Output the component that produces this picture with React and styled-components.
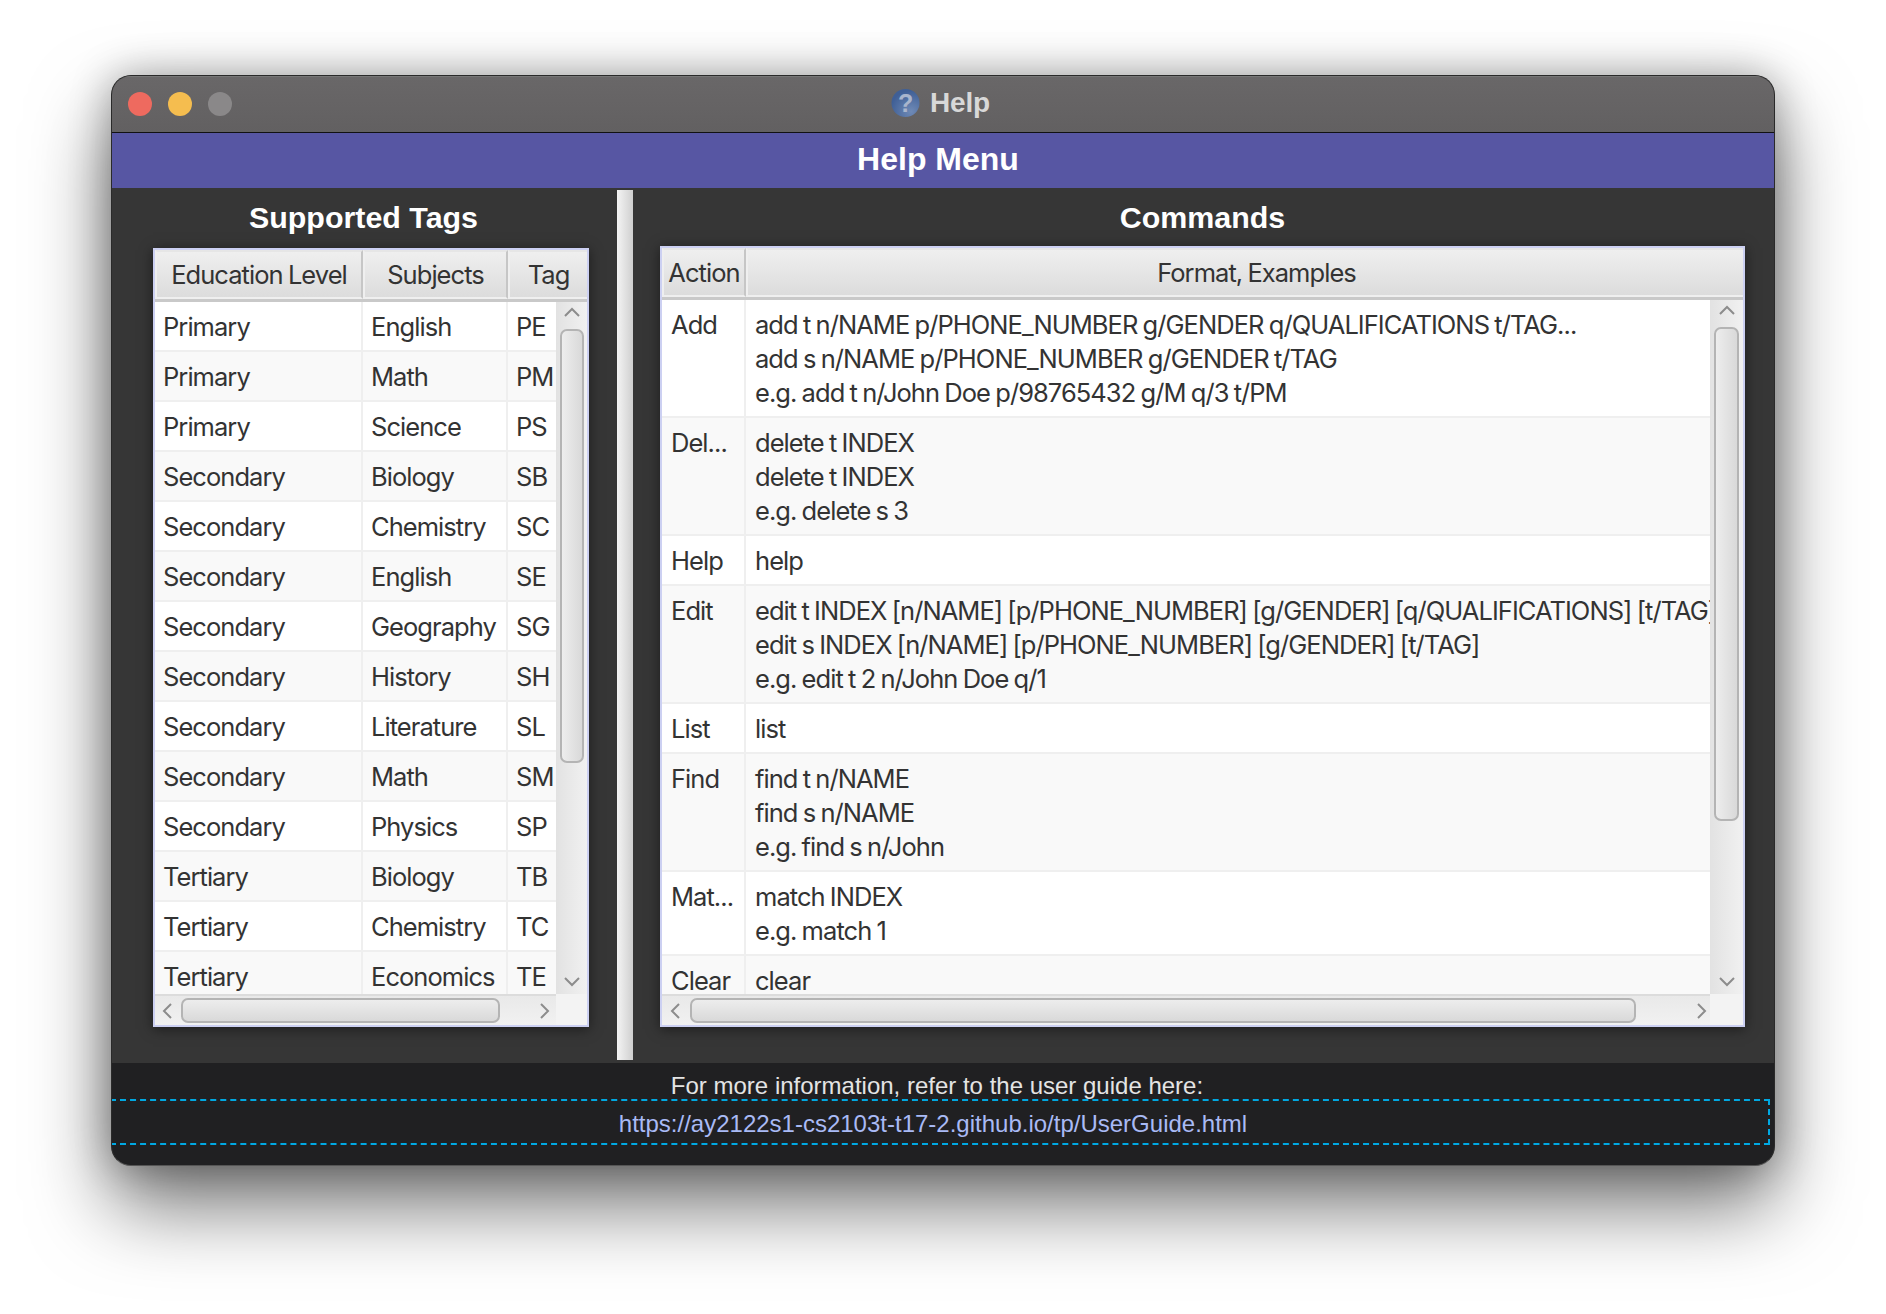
import React from 'react';
import styled, { createGlobalStyle } from 'styled-components';

const GlobalStyle = createGlobalStyle`
  html, body { margin: 0; padding: 0; background: #fff; }
  * { box-sizing: border-box; }
`;

const TABLE_FONT = `Inter, Roboto, "Liberation Sans", sans-serif`;
const LABEL_FONT = `"Liberation Sans", Arial, sans-serif`;

const Page = styled.div`
  width: 1886px;
  height: 1314px;
  padding: 75px 0 0 111px;
  overflow: hidden;
`;

const Window = styled.div`
  width: 1664px;
  height: 1091px;
  display: flex;
  flex-direction: column;
  border: 1px solid #2a2a2a;
  border-bottom-color: #555;
  border-radius: 20px;
  overflow: hidden;
  background: #363636;
  box-shadow: 0 40px 80px rgba(0, 0, 0, 0.55), 0 0 40px rgba(0, 0, 0, 0.3);
`;

const TitleBar = styled.div`
  height: 57px;
  flex: none;
  display: flex;
  align-items: center;
  padding: 0 0 2px 16px;
  gap: 16px;
  position: relative;
  background: linear-gradient(#696768, #626061);
  border-top: 1px solid #777;
  border-bottom: 1px solid #111;
`;

const Light = styled.span`
  width: 24px;
  height: 24px;
  border-radius: 50%;
  background: ${p => p.$color};
`;

const WindowTitle = styled.div`
  position: absolute;
  left: 779px;
  top: 10px;
  display: flex;
  align-items: center;
  gap: 10px;
  font: bold 28px ${LABEL_FONT};
  color: #d8d8d8;
  letter-spacing: -0.2px;
`;

const Banner = styled.div`
  height: 55px;
  flex: none;
  padding-right: 10px;
  background: #5756a3;
  color: #fff;
  font: bold 32px/53px ${LABEL_FONT};
  text-align: center;
`;

const Content = styled.div`
  height: 875px;
  flex: none;
  display: flex;
`;

const Pane = styled.section`
  width: ${p => p.$width}px;
  flex: none;
  display: flex;
  flex-direction: column;
  padding: 0 ${p => p.$right}px 36px ${p => p.$left}px;
`;

const PaneTitle = styled.h2`
  margin: 0 -${p => p.$right}px 0 -${p => p.$left}px;
  height: ${p => p.$height}px;
  flex: none;
  padding: 11px 2px 0 0;
  font: bold 30.4px/36px ${LABEL_FONT};
  color: #fff;
  text-align: center;
`;

const Divider = styled.div`
  width: 16px;
  flex: none;
  margin: 2px 0 3px;
  background: linear-gradient(to right, #f4f4f4, #cfcfcf);
`;

const Table = styled.div`
  flex: 1;
  min-height: 0;
  display: grid;
  grid-template-columns: 1fr ${p => p.$barWidth}px;
  grid-template-rows: 52px 1fr 31px;
  border: 2px solid #ccd0f2;
  background: #f2f2f2;
  box-shadow: 0 2px 12px rgba(0, 0, 0, 0.5);
  font: 25.5px ${TABLE_FONT};
  letter-spacing: -0.95px;
  word-spacing: -1px;
  color: #333;
`;

const Header = styled.div`
  grid-column: 1 / 3;
  display: grid;
  grid-template-columns: ${p => p.$columns};
  border-bottom: 3px solid #c9c9c9;
`;

const HeaderCell = styled.div`
  display: flex;
  align-items: center;
  justify-content: center;
  padding-left: ${p => p.$shift || 0}px;
  background: linear-gradient(#efefef, #dcdcdc);
  border: 2px solid #efefef;
  border-top-color: #e6e6e6;
  border-right: 2px solid #c6c6c6;
  white-space: nowrap;
  overflow: hidden;
  &:last-child { border-right: 0; }
`;

const Body = styled.div`
  overflow: hidden;
  min-width: 0;
`;

const Row = styled.div`
  display: grid;
  grid-template-columns: ${p => p.$columns};
  background: ${p => (p.$odd ? '#f9f9f9' : '#fff')};
  border-bottom: 2px solid #efefef;
`;

const Cell = styled.div`
  padding: 8px 0 6px ${p => p.$inset || 8}px;
  min-height: 48px;
  line-height: 34px;
  white-space: nowrap;
  overflow: hidden;
  border-right: 2px solid #efefef;
  &:last-child { border-right: 0; }
`;

const Line = styled.div``;

const VerticalBar = styled.div`
  display: flex;
  flex-direction: column;
  align-items: center;
  background: linear-gradient(to right, #e2e2e2, #f1f1f1);
`;

const VerticalThumb = styled.div`
  width: ${p => p.$width}px;
  height: ${p => p.$height}px;
  margin-top: ${p => p.$top}px;
  border: 2px solid #b4b4b4;
  border-radius: 7px;
  background: linear-gradient(to right, #ededed, #d9d9d9);
`;

const ArrowSlot = styled.div`
  flex: none;
  display: flex;
  align-items: flex-start;
  justify-content: center;
  margin-top: ${p => (p.$end ? 'auto' : '0')};
  height: 24px;
  padding-top: 2px;
  color: #8c8c8c;
`;

const HorizontalBar = styled.div`
  display: flex;
  align-items: center;
  border-top: 2px solid #dcdcdc;
  background: linear-gradient(#e9e9e9, #f1f1f1);
  min-width: 0;
`;

const HorizontalThumb = styled.div`
  width: ${p => p.$width}px;
  height: 25px;
  flex: none;
  border: 2px solid #b4b4b4;
  border-radius: 7px;
  background: linear-gradient(#ededed, #d9d9d9);
`;

const SideArrow = styled.div`
  flex: none;
  width: ${p => p.$width}px;
  display: flex;
  justify-content: ${p => p.$align};
  color: #8c8c8c;
`;

const Spacer = styled.div`
  flex: 1;
`;

const Corner = styled.div`
  background: #f3f3f3;
`;

const Footer = styled.footer`
  flex: 1;
  padding: 7px 4px 0 0;
  background: #202022;
  font-family: ${LABEL_FONT};
  font-size: 24px;
  text-align: center;
`;

const FooterText = styled.div`
  height: 29px;
  line-height: 31px;
  padding-right: 8px;
  color: #e4e4e4;
`;

const LinkBox = styled.div`
  height: 46px;
  line-height: 45px;
  margin-left: -2px;
  padding-right: 14px;
  border: 2px dashed #00a8e2;
  color: #a9baf5;
`;

const Chevron = ({ points }) => (
  <svg width="18" height="18" viewBox="0 0 18 18" fill="none" stroke="currentColor" strokeWidth="2">
    <polyline points={points} />
  </svg>
);
const UP = '2,12 9,5 16,12';
const DOWN = '2,6 9,13 16,6';
const LEFT = '12,2 5,9 12,16';
const RIGHT = '6,2 13,9 6,16';

const HelpIcon = () => (
  <svg width="29" height="30" viewBox="0 0 29 30">
    <defs>
      <radialGradient id="helpBall" cx="70%" cy="80%" r="75%">
        <stop offset="0%" stopColor="#6f8ab6" />
        <stop offset="100%" stopColor="#3f5f96" />
      </radialGradient>
    </defs>
    <circle cx="14.5" cy="15" r="14" fill="url(#helpBall)" />
    <text x="14.5" y="24" textAnchor="middle" fontFamily="Liberation Sans" fontWeight="bold" fontSize="25" fill="#a9b5cc">?</text>
  </svg>
);

const tags = [
  ['Primary', 'English', 'PE'],
  ['Primary', 'Math', 'PM'],
  ['Primary', 'Science', 'PS'],
  ['Secondary', 'Biology', 'SB'],
  ['Secondary', 'Chemistry', 'SC'],
  ['Secondary', 'English', 'SE'],
  ['Secondary', 'Geography', 'SG'],
  ['Secondary', 'History', 'SH'],
  ['Secondary', 'Literature', 'SL'],
  ['Secondary', 'Math', 'SM'],
  ['Secondary', 'Physics', 'SP'],
  ['Tertiary', 'Biology', 'TB'],
  ['Tertiary', 'Chemistry', 'TC'],
  ['Tertiary', 'Economics', 'TE'],
];

const commands = [
  ['Add', ['add t n/NAME p/PHONE_NUMBER g/GENDER q/QUALIFICATIONS t/TAG...', 'add s n/NAME p/PHONE_NUMBER g/GENDER t/TAG', 'e.g. add t n/John Doe p/98765432 g/M q/3 t/PM']],
  ['Del...', ['delete t INDEX', 'delete t INDEX', 'e.g. delete s 3']],
  ['Help', ['help']],
  ['Edit', ['edit t INDEX [n/NAME] [p/PHONE_NUMBER] [g/GENDER] [q/QUALIFICATIONS] [t/TAG]', 'edit s INDEX [n/NAME] [p/PHONE_NUMBER] [g/GENDER] [t/TAG]', 'e.g. edit t 2 n/John Doe q/1']],
  ['List', ['list']],
  ['Find', ['find t n/NAME', 'find s n/NAME', 'e.g. find s n/John']],
  ['Mat...', ['match INDEX', 'e.g. match 1']],
  ['Clear', ['clear']],
];

const TAG_COLUMNS = '208px 145px 1fr';
const COMMAND_COLUMNS = '84px 1fr';

export default function App() {
  return (
    <Page>
      <GlobalStyle />
      <Window>
        <TitleBar>
          <Light $color="#ee6a5f" />
          <Light $color="#f5bd4f" />
          <Light $color="#8a8889" />
          <WindowTitle>
            <HelpIcon />
            Help
          </WindowTitle>
        </TitleBar>
        <Banner>Help Menu</Banner>
        <Content>
          <Pane $width={505} $left={41} $right={28}>
            <PaneTitle $height={60} $left={41} $right={28}>Supported Tags</PaneTitle>
            <Table $barWidth={31}>
              <Header $columns={TAG_COLUMNS}>
                <HeaderCell>Education Level</HeaderCell>
                <HeaderCell>Subjects</HeaderCell>
                <HeaderCell>Tag</HeaderCell>
              </Header>
              <Body>
                {tags.map((tag, i) => (
                  <Row key={i} $columns={TAG_COLUMNS} $odd={i % 2 === 1}>
                    <Cell>{tag[0]}</Cell>
                    <Cell>{tag[1]}</Cell>
                    <Cell>{tag[2]}</Cell>
                  </Row>
                ))}
              </Body>
              <VerticalBar>
                <ArrowSlot><Chevron points={UP} /></ArrowSlot>
                <VerticalThumb $width={24} $height={434} $top={3} />
                <ArrowSlot $end><Chevron points={DOWN} /></ArrowSlot>
              </VerticalBar>
              <HorizontalBar>
                <SideArrow $width={26} $align="center"><Chevron points={LEFT} /></SideArrow>
                <HorizontalThumb $width={319} />
                <Spacer />
                <SideArrow $width={24} $align="center"><Chevron points={RIGHT} /></SideArrow>
              </HorizontalBar>
              <Corner />
            </Table>
          </Pane>
          <Divider />
          <Pane $width={1141} $left={27} $right={29}>
            <PaneTitle $height={58} $left={27} $right={29}>Commands</PaneTitle>
            <Table $barWidth={33}>
              <Header $columns={COMMAND_COLUMNS}>
                <HeaderCell>Action</HeaderCell>
                <HeaderCell $shift={22}>Format, Examples</HeaderCell>
              </Header>
              <Body>
                {commands.map(([action, lines], i) => (
                  <Row key={i} $columns={COMMAND_COLUMNS} $odd={i % 2 === 1}>
                    <Cell $inset={9}>{action}</Cell>
                    <Cell $inset={9}>
                      {lines.map((line, j) => <Line key={j}>{line}</Line>)}
                    </Cell>
                  </Row>
                ))}
              </Body>
              <VerticalBar>
                <ArrowSlot><Chevron points={UP} /></ArrowSlot>
                <VerticalThumb $width={25} $height={494} $top={3} />
                <ArrowSlot $end><Chevron points={DOWN} /></ArrowSlot>
              </VerticalBar>
              <HorizontalBar>
                <SideArrow $width={28} $align="center"><Chevron points={LEFT} /></SideArrow>
                <HorizontalThumb $width={946} />
                <Spacer />
                <SideArrow $width={24} $align="flex-end"><Chevron points={RIGHT} /></SideArrow>
              </HorizontalBar>
              <Corner />
            </Table>
          </Pane>
        </Content>
        <Footer>
          <FooterText>For more information, refer to the user guide here:</FooterText>
          <LinkBox>https://ay2122s1-cs2103t-t17-2.github.io/tp/UserGuide.html</LinkBox>
        </Footer>
      </Window>
    </Page>
  );
}
